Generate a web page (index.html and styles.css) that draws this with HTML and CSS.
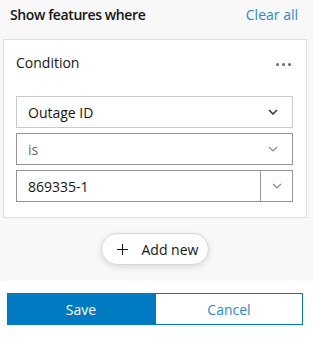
FILE: index.html
```html
<!DOCTYPE html>
<html>
<head>
<meta charset="utf-8">
<link rel="stylesheet" href="styles.css">
</head>
<body>
<div class="panel">
  <div class="header">
    <span class="title">Show features where</span>
    <span class="clear">Clear all</span>
  </div>
  <div class="card">
    <div class="card-head">
      <span class="cond">Condition</span>
      <span class="dots"><i></i><i></i><i></i></span>
    </div>
    <div class="fields">
      <div class="select light">
        <span class="val">Outage ID</span>
        <svg class="chev dark" width="10" height="6" viewBox="0 0 10 6"><path d="M1 1l4 4 4-4" fill="none" stroke="#333" stroke-width="1.5"/></svg>
      </div>
      <div class="select">
        <span class="val muted">is</span>
        <svg class="chev" width="10" height="6" viewBox="0 0 10 6"><path d="M1 1l4 4 4-4" fill="none" stroke="#8a8a8a" stroke-width="1.2"/></svg>
      </div>
      <div class="select combo">
        <span class="val">869335-1</span>
        <span class="combo-btn"><svg class="chev" width="10" height="6" viewBox="0 0 10 6"><path d="M1 1l4 4 4-4" fill="none" stroke="#8a8a8a" stroke-width="1.2"/></svg></span>
      </div>
    </div>
  </div>
  <div class="add-row">
    <div class="add-btn">
      <svg class="plus" width="11" height="11" viewBox="0 0 11 11"><path d="M5.5 0v11M0 5.5h11" stroke="#151515" stroke-width="1.1"/></svg>
      <span>Add new</span>
    </div>
  </div>
</div>
<div class="actions">
  <div class="btn save">Save</div>
  <div class="btn cancel">Cancel</div>
</div>
</body>
</html>
```
FILE: styles.css
```css
* { box-sizing: border-box; }
body {
  margin: 0;
  background: #fff;
  font-family: "Open Sans", "Liberation Sans", sans-serif;
  color: #151515;
}
.panel {
  background: #f8f8f8;
  height: 281px;
  padding-top: 1px;
}
.header {
  display: flex;
  justify-content: space-between;
  align-items: center;
  height: 27px;
  padding: 0 15px 0 10px;
}
.title {
  font-size: 14px;
  font-weight: 600;
  letter-spacing: -0.4px;
  color: #151515;
}
.clear {
  font-size: 14px;
  color: #2a8ad0;
}
.card {
  margin: 11px 6px 0 3px;
  background: #fff;
  border: 1px solid #dfdfdf;
  padding: 0 13px 15px 12px;
}
.card-head {
  display: flex;
  justify-content: space-between;
  align-items: center;
  height: 45px;
  margin-bottom: 11px;
}
.cond {
  font-size: 14px;
  color: #151515;
}
.dots {
  display: flex;
  gap: 3px;
  margin-right: 2px;
  margin-top: 3px;
}
.dots i {
  width: 3px;
  height: 3px;
  border-radius: 50%;
  background: #6a6a6a;
}
.fields {
  display: flex;
  flex-direction: column;
  gap: 5px;
}
.select {
  height: 32px;
  border: 1px solid #959595;
  display: flex;
  align-items: center;
  justify-content: space-between;
  padding: 0 14px 0 11px;
  font-size: 14px;
}
.select.light { border-color: #cacaca; }
.val { color: #151515; }
.val.muted { color: #6a6a6a; }
.combo { padding-right: 0; }
.combo-btn {
  width: 32px;
  height: 100%;
  border-left: 1px solid #959595;
  display: flex;
  align-items: center;
  justify-content: center;
}
.chev { display: block; }
.add-row {
  display: flex;
  justify-content: center;
  margin-top: 15px;
}
.add-btn {
  height: 32px;
  width: 108px;
  margin-right: 4px;
  border: 1px solid #d6d6d6;
  border-radius: 16px;
  background: #fff;
  box-shadow: 0 2px 6px rgba(0,0,0,0.12);
  display: flex;
  align-items: center;
  padding-left: 15px;
  gap: 14px;
  font-size: 14px;
  color: #151515;
}
.plus { display: block; }
.actions {
  display: flex;
  padding: 12px 10px 0 7px;
}
.btn {
  flex: 1;
  height: 32px;
  display: flex;
  align-items: center;
  justify-content: center;
  font-size: 14px;
}
.save {
  background: #007ac2;
  color: #fff;
  border: 1px solid #007ac2;
}
.cancel {
  background: #fff;
  color: #2a8ad0;
  border: 1px solid #007ac2;
}
```
